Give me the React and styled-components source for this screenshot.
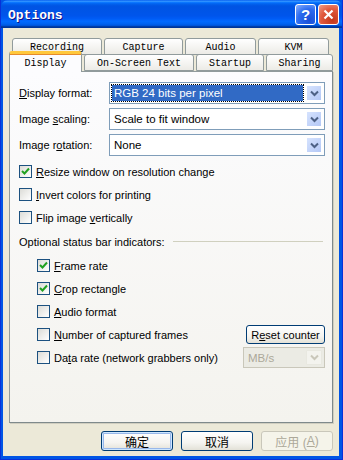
import styled, { createGlobalStyle } from 'styled-components';

const Global = createGlobalStyle`
  html, body { margin: 0; padding: 0; background: #fff; }
  * { box-sizing: border-box; }
`;

const Window = styled.div`
  width: 343px;
  height: 460px;
  display: flex;
  flex-direction: column;
  background: #0055e5;
  border: 1px solid #0831d9;
  border-top: none;
  font-family: "Liberation Sans", Arial, sans-serif;
  font-size: 11px;
  color: #000;
`;

const TitleBar = styled.div`
  height: 28px;
  flex: none;
  display: flex;
  align-items: center;
  padding: 0 3px 0 7px;
  background: linear-gradient(to bottom, #0058ee 0%, #3593ff 4%, #288eff 6%, #127dff 8%,
    #036ffc 10%, #0262ee 14%, #0057e5 20%, #0054e3 24%, #0055eb 56%, #005bf5 66%,
    #026afe 76%, #0062ef 86%, #0052d6 92%, #0040ab 94%, #003092 100%);
  border-radius: 7px 7px 0 0;
`;

const Title = styled.div`
  flex: 1;
  color: #fff;
  font-family: "Liberation Mono", "Courier New", monospace;
  font-weight: bold;
  font-size: 13px;
  text-shadow: 1px 1px 0 #0f1089;
  padding-top: 2px;
`;

const CapButton = styled.div`
  width: 21px;
  height: 21px;
  margin-left: 2px;
  border: 1px solid #fff;
  border-radius: 3px;
  display: flex;
  align-items: center;
  justify-content: center;
  color: #fff;
  font-weight: bold;
  font-size: 15px;
  background: ${p => p.$close
    ? 'radial-gradient(circle at 70% 80%, #c3381b 0%, #e0593d 55%, #f0a08c 100%)'
    : 'radial-gradient(circle at 70% 80%, #1a4fd6 0%, #2d6cf0 55%, #8db3ff 100%)'};
`;

const Client = styled.div`
  flex: 1;
  margin: 0 3px 3px 2px;
  background: #ece9d8;
  display: flex;
  flex-direction: column;
  padding: 10px 5px 0 6px;
`;

const TabStrip = styled.div`
  display: flex;
  flex-direction: column;
  position: relative;
  z-index: 1;
`;

const TabRow = styled.div`
  display: flex;
  gap: 2px;
  padding-left: ${p => p.$indent}px;
  margin-top: ${p => p.$top}px;
  height: ${p => p.$h}px;
  align-items: flex-end;
`;

const Tab = styled.div`
  width: ${p => p.$w}px;
  height: ${p => (p.$active ? 21 : 17)}px;
  margin-bottom: ${p => (p.$active ? -1 : 0)}px;
  border: 1px solid #919b9c;
  border-bottom: ${p => (p.$active ? 'none' : '1px solid #919b9c')};
  border-top: ${p => (p.$active ? '3px solid #ffc83c' : '1px solid #919b9c')};
  border-radius: 3px 3px 0 0;
  background: ${p => (p.$active ? '#fcfcfe' : 'linear-gradient(#fff, #ecebe6)')};
  font-family: "Liberation Mono", "Courier New", monospace;
  font-size: 10px;
  display: flex;
  align-items: center;
  justify-content: center;
  padding-top: ${p => (p.$active ? 0 : 1)}px;
  box-shadow: ${p => (p.$active ? 'inset 0 1px 0 #e68b2c' : 'none')};
`;

const Panel = styled.div`
  height: 352px;
  margin-right: 1px;
  border: 1px solid #919b9c;
  border-right-color: #7f8a8b;
  border-bottom-color: #7f8a8b;
  box-shadow: 1px 1px 0 #d0cec0;
  background: linear-gradient(#fcfcfe, #f4f3ee);
  display: flex;
  flex-direction: column;
  padding: 10px 7px 0 9px;
`;

const FieldRow = styled.div`
  display: flex;
  align-items: center;
  height: 22px;
  margin-bottom: 4px;
`;

const Label = styled.div`
  width: 90px;
`;

const Select = styled.div`
  flex: ${p => (p.$w ? 'none' : 1)};
  width: ${p => (p.$w ? `${p.$w}px` : 'auto')};
  height: ${p => p.$h || 22}px;
  border: 1px solid ${p => (p.$disabled ? '#c9c7ba' : '#7f9db9')};
  background: ${p => (p.$disabled ? '#ebebe4' : '#fff')};
  color: ${p => (p.$disabled ? '#aca899' : '#000')};
  display: flex;
  align-items: center;
  padding: 2px;
  font-size: 11.5px;
`;

const SelectText = styled.div`
  flex: 1;
  height: 100%;
  display: flex;
  align-items: center;
  padding-left: 2px;
  margin-right: 3px;
  background: ${p => (p.$focused ? '#316ac5' : 'transparent')};
  color: ${p => (p.$focused ? '#fff' : 'inherit')};
  outline: ${p => (p.$focused ? '1px dotted #000' : 'none')};
`;

const DropBtn = styled.div`
  width: 16px;
  height: 100%;
  border: 1px solid ${p => (p.$disabled ? '#e8e8e0' : '#fff')};
  border-radius: 1px;
  background: ${p => (p.$disabled ? '#f3f3ee' : 'linear-gradient(135deg, #d6e3fe, #b4c8f6)')};
  display: flex;
  align-items: center;
  justify-content: center;
`;

const Chevron = ({ disabled }) => (
  <svg width="9" height="7" viewBox="0 0 9 7">
    <path d="M1 1.5 L4.5 5 L8 1.5" fill="none" stroke={disabled ? '#c9c7ba' : '#4d6185'} strokeWidth="2" />
  </svg>
);

const CheckRow = styled.div`
  display: flex;
  align-items: center;
  height: 23px;
  padding-left: ${p => (p.$indent ? 18 : 0)}px;
`;

const Box = styled.div`
  width: 13px;
  height: 13px;
  flex: none;
  border: 1px solid #1c5180;
  background: linear-gradient(135deg, #dcdcd7, #fff);
  margin-right: 4px;
  display: flex;
  align-items: center;
  justify-content: center;
`;

const Check = () => (
  <svg width="9" height="9" viewBox="0 0 9 9">
    <path d="M1 4 L3.5 6.5 L8 1.5" fill="none" stroke="#21a121" strokeWidth="2" />
  </svg>
);

const CheckLabel = styled.div`
  flex: 1;
`;

const SectionRow = styled.div`
  display: flex;
  align-items: center;
  height: 25px;
  gap: 8px;
  padding-right: 2px;
`;

const Rule = styled.div`
  flex: 1;
  height: 1px;
  background: #d0d0bf;
`;

const Btn = styled.div`
  width: ${p => p.$w}px;
  height: ${p => p.$h}px;
  border: 1px solid ${p => (p.$disabled ? '#c9c7ba' : '#003c74')};
  border-radius: 3px;
  background: ${p => (p.$disabled ? '#f5f4ea' : 'linear-gradient(#fff 0%, #f5f4f0 60%, #e3e1d7 100%)')};
  color: ${p => (p.$disabled ? '#aca899' : '#000')};
  box-shadow: ${p => (p.$default ? 'inset 0 0 0 1px #cee7ff, inset 0 0 0 2px #98b8ea' : 'none')};
  display: flex;
  align-items: center;
  justify-content: center;
  font-size: ${p => p.$fs || 11}px;
  font-family: "Liberation Sans", "Noto Sans CJK SC", sans-serif;
`;

const ButtonBar = styled.div`
  display: flex;
  justify-content: flex-end;
  gap: 8px;
  padding: 8px 1px 0 0;
`;

const U = styled.span`
  text-decoration: underline;
  text-underline-offset: 1px;
`;

const CheckItem = ({ checked, indent, children, right }) => (
  <CheckRow $indent={indent}>
    <Box>{checked && <Check />}</Box>
    <CheckLabel>{children}</CheckLabel>
    {right}
  </CheckRow>
);

export default function App() {
  return (
    <>
      <Global />
      <Window>
        <TitleBar>
          <Title>Options</Title>
          <CapButton>?</CapButton>
          <CapButton $close>
            <svg width="11" height="11" viewBox="0 0 11 11">
              <path d="M1.5 1.5 L9.5 9.5 M9.5 1.5 L1.5 9.5" stroke="#fff" strokeWidth="2.2" />
            </svg>
          </CapButton>
        </TitleBar>
        <Client>
          <TabStrip>
            <TabRow $indent={3} $top={0} $h={17}>
              <Tab $w={90}>Recording</Tab>
              <Tab $w={79}>Capture</Tab>
              <Tab $w={71}>Audio</Tab>
              <Tab $w={71}>KVM</Tab>
            </TabRow>
            <TabRow $indent={0} $top={-1} $h={17}>
              <Tab $w={73} $active>Display</Tab>
              <Tab $w={110}>On-Screen Text</Tab>
              <Tab $w={68}>Startup</Tab>
              <Tab $w={67}>Sharing</Tab>
            </TabRow>
          </TabStrip>
          <Panel>
            <FieldRow>
              <Label><U>D</U>isplay format:</Label>
              <Select>
                <SelectText $focused>RGB 24 bits per pixel</SelectText>
                <DropBtn><Chevron /></DropBtn>
              </Select>
            </FieldRow>
            <FieldRow>
              <Label>Image <U>s</U>caling:</Label>
              <Select>
                <SelectText>Scale to fit window</SelectText>
                <DropBtn><Chevron /></DropBtn>
              </Select>
            </FieldRow>
            <FieldRow>
              <Label>Image r<U>o</U>tation:</Label>
              <Select>
                <SelectText>None</SelectText>
                <DropBtn><Chevron /></DropBtn>
              </Select>
            </FieldRow>
            <CheckItem checked><U>R</U>esize window on resolution change</CheckItem>
            <CheckItem><U>I</U>nvert colors for printing</CheckItem>
            <CheckItem>Flip image <U>v</U>ertically</CheckItem>
            <SectionRow>
              <span>Optional status bar indicators:</span>
              <Rule />
            </SectionRow>
            <CheckItem indent checked><U>F</U>rame rate</CheckItem>
            <CheckItem indent checked><U>C</U>rop rectangle</CheckItem>
            <CheckItem indent><U>A</U>udio format</CheckItem>
            <CheckItem indent right={<Btn $w={79} $h={19}>R<U>e</U>set counter</Btn>}>
              <U>N</U>umber of captured frames
            </CheckItem>
            <CheckItem indent right={
              <Select $w={82} $h={21} $disabled>
                <SelectText>MB/s</SelectText>
                <DropBtn $disabled><Chevron disabled /></DropBtn>
              </Select>
            }>
              Da<U>t</U>a rate (network grabbers only)
            </CheckItem>
          </Panel>
          <ButtonBar>
            <Btn $w={72} $h={20} $default $fs={12}>确定</Btn>
            <Btn $w={72} $h={20} $fs={12}>取消</Btn>
            <Btn $w={72} $h={20} $fs={12} $disabled>应用 (<U>A</U>)</Btn>
          </ButtonBar>
        </Client>
      </Window>
    </>
  );
}
